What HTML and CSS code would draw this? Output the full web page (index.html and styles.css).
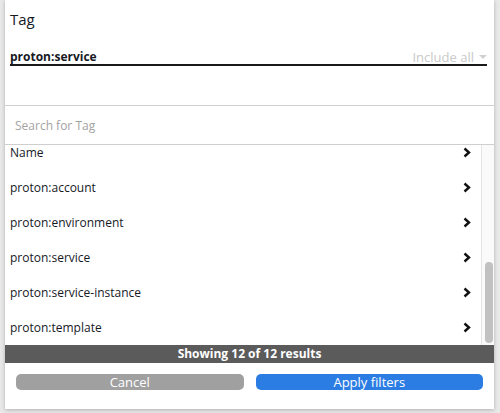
FILE: index.html
```html
<!DOCTYPE html>
<html lang="en">
<head>
  <meta charset="UTF-8">
  <meta name="viewport" content="width=device-width, initial-scale=1.0">
  <title>Tag filter</title>
  <link rel="stylesheet" href="styles.css">
</head>
<body>
  <div class="panel">

    <div class="head">
      <div class="title">Tag</div>
      <div class="tag-row">
        <span class="tag-value">proton:service</span>
        <span class="mode">Include all <span class="caret"></span></span>
      </div>
    </div>

    <div class="search">
      <input type="text" placeholder="Search for Tag">
    </div>

    <div class="list-wrap">
      <ul class="list">
        <li>Name <svg class="chev" width="8" height="11" viewBox="0 0 8 11"><polyline points="1.5,1.5 6,5.5 1.5,9.5" /></svg></li>
        <li>proton:account <svg class="chev" width="8" height="11" viewBox="0 0 8 11"><polyline points="1.5,1.5 6,5.5 1.5,9.5" /></svg></li>
        <li>proton:environment <svg class="chev" width="8" height="11" viewBox="0 0 8 11"><polyline points="1.5,1.5 6,5.5 1.5,9.5" /></svg></li>
        <li>proton:service <svg class="chev" width="8" height="11" viewBox="0 0 8 11"><polyline points="1.5,1.5 6,5.5 1.5,9.5" /></svg></li>
        <li>proton:service-instance <svg class="chev" width="8" height="11" viewBox="0 0 8 11"><polyline points="1.5,1.5 6,5.5 1.5,9.5" /></svg></li>
        <li>proton:template <svg class="chev" width="8" height="11" viewBox="0 0 8 11"><polyline points="1.5,1.5 6,5.5 1.5,9.5" /></svg></li>
      </ul>
      <div class="track"><div class="thumb"></div></div>
    </div>

    <div class="status">Showing 12 of 12 results</div>

    <div class="actions">
      <button class="btn cancel">Cancel</button>
      <button class="btn apply">Apply filters</button>
    </div>

  </div>
</body>
</html>
```

FILE: styles.css
```css
body {
  margin: 0;
  height: 413px;
  background: #e9e9e9;
  font-family: 'Open Sans', 'Noto Sans', sans-serif;
  color: #16191f;
  overflow: hidden;
}

.panel {
  margin: 0 6px 0 5px;
  height: 409px;
  background: #fff;
  box-shadow: 0 1px 4px rgba(0, 0, 0, 0.25);
  display: flex;
  flex-direction: column;
}

/* header with selected tag */
.head {
  height: 106px;
  box-sizing: border-box;
  padding: 9px 7px 0 5px;
  border-bottom: 1px solid #cfcfcf;
}

.title {
  font-size: 15px;
  line-height: 20px;
}

.tag-row {
  margin-top: 20px;
  display: flex;
  justify-content: space-between;
  align-items: center;
  height: 15px;
  border-bottom: 2px solid #1a1a1a;
  font-size: 12px;
}

.tag-value {
  font-weight: 700;
}

.mode {
  color: #c9c9c9;
  font-size: 13px;
  display: flex;
  align-items: center;
  gap: 5px;
}

.caret {
  width: 0;
  height: 0;
  border-left: 4px solid transparent;
  border-right: 4px solid transparent;
  border-top: 4px solid #d0d0d0;
}

/* search */
.search {
  height: 38px;
  border-bottom: 1px solid #cfcfcf;
  display: flex;
  align-items: center;
}

.search input {
  border: none;
  outline: none;
  width: 100%;
  padding: 0 10px;
  font-family: inherit;
  font-size: 12px;
  color: #16191f;
}

.search input::placeholder {
  color: #a3a3a3;
}

/* list */
.list-wrap {
  height: 200px;
  display: flex;
  overflow: hidden;
}

.list {
  flex: 1;
  list-style: none;
  margin: -10px 0 0 0;
  padding: 0;
}

.list li {
  height: 35px;
  display: flex;
  align-items: center;
  justify-content: space-between;
  padding: 0 10px 0 5px;
  font-size: 12px;
}

.chev polyline {
  fill: none;
  stroke: #111;
  stroke-width: 2.4;
}

.track {
  width: 13px;
  border-left: 1px solid #e4e4e4;
  background: #fafafa;
  padding-top: 117px;
  box-sizing: border-box;
}

.thumb {
  width: 8px;
  height: 81px;
  margin-left: 3px;
  border-radius: 4px;
  background: #c1c1c1;
}

/* results bar */
.status {
  height: 18px;
  line-height: 18px;
  background: #5b5b5b;
  color: #fff;
  font-size: 12px;
  font-weight: 700;
  text-align: center;
}

.actions {
  display: flex;
  gap: 12px;
  padding: 11px 11px 0;
}

.btn {
  flex: 1;
  height: 16px;
  border: none;
  border-radius: 5px;
  color: #fff;
  font-family: inherit;
  font-size: 13px;
  line-height: 16px;
  padding: 0;
}

.cancel {
  background: #a0a0a0;
}

.apply {
  background: #2b7de3;
}
```
